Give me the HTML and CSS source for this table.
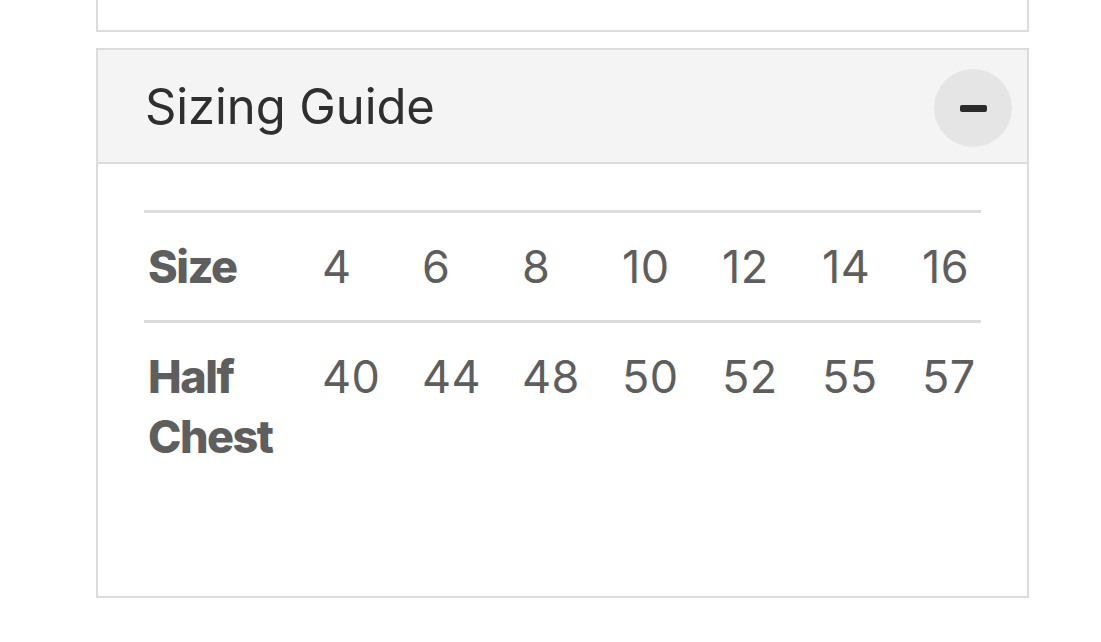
FILE: index.html
```html
<!DOCTYPE html>
<html lang="en">
<head>
<meta charset="utf-8">
<title>Sizing Guide</title>
<link rel="stylesheet" href="styles.css">
</head>
<body>
<div class="page">
  <div class="card card-prev"></div>
  <section class="card accordion">
    <header class="acc-head">
      <h2 class="acc-title">Sizing Guide</h2>
      <button class="acc-toggle" aria-label="Collapse"><span class="minus"></span></button>
    </header>
    <div class="acc-body">
      <table class="size-table">
        <colgroup>
          <col class="c-label">
          <col class="c-num"><col class="c-num"><col class="c-num"><col class="c-num"><col class="c-num"><col class="c-num">
          <col class="c-last">
        </colgroup>
        <tbody>
          <tr>
            <th>Size</th>
            <td>4</td><td>6</td><td>8</td><td>10</td><td>12</td><td>14</td><td>16</td>
          </tr>
          <tr>
            <th>Half Chest</th>
            <td>40</td><td>44</td><td>48</td><td>50</td><td>52</td><td>55</td><td>57</td>
          </tr>
        </tbody>
      </table>
    </div>
  </section>
</div>
</body>
</html>
```

FILE: styles.css
```css
html, body {
  margin: 0;
  padding: 0;
  background: #ffffff;
}

body {
  font-family: Inter, "Open Sans", "Liberation Sans", sans-serif;
}

.page {
  width: 933px;
  margin-left: 96px;
  display: flex;
  flex-direction: column;
  gap: 16px;
}

.card {
  border: 2px solid #dcdcdc;
  background: #ffffff;
}

.card-prev {
  border-top: none;
  height: 30px;
}

.acc-head {
  display: flex;
  align-items: center;
  justify-content: space-between;
  height: 112px;
  padding: 0 15px 0 47px;
  background: #f4f4f4;
  border-bottom: 2px solid #dcdcdc;
}

.acc-title {
  margin: 0;
  font-size: 49px;
  font-weight: 400;
  color: #2f2f2f;
  letter-spacing: -0.1px;
}

.acc-toggle {
  width: 78px;
  height: 78px;
  border-radius: 50%;
  border: none;
  padding: 0;
  background: #e5e5e5;
  display: flex;
  align-items: center;
  justify-content: center;
  margin-top: 4px;
}

.minus {
  display: block;
  width: 27px;
  height: 7px;
  border-radius: 2px;
  background: #2b2b2b;
}

.acc-body {
  padding: 46px 45px 106px 46px;
}

.size-table {
  width: 837px;
  table-layout: fixed;
  border-collapse: collapse;
  color: #5e5e5e;
  font-size: 45px;
  line-height: 60px;
}

.c-label { width: 174px; }
.c-num { width: 100px; }
.c-last { width: 63px; }

.size-table tr {
  border-top: 3px solid #dcdcdc;
}

.size-table th,
.size-table td {
  padding: 24px 4px 23px 4px;
  text-align: left;
  vertical-align: top;
}

.size-table th {
  font-weight: 800;
  letter-spacing: -1.5px;
}

.size-table td {
  font-weight: 400;
  letter-spacing: 0.5px;
}
```
